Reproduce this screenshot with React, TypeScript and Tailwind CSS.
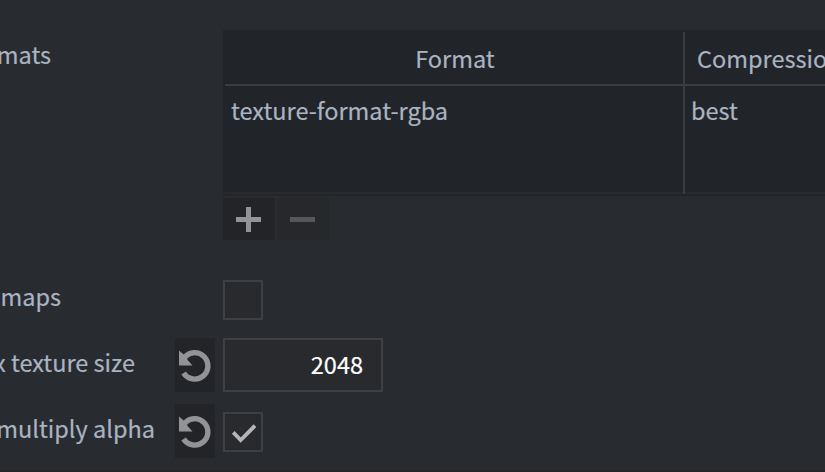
import type { ReactNode } from "react";

function Label({ width, children }: { width: string; children: ReactNode }) {
  return (
    <div className={`flex shrink-0 justify-end overflow-hidden whitespace-pre ${width}`}>
      <span>{children}</span>
    </div>
  );
}

function ResetButton() {
  return (
    <button className="flex h-[54px] w-10 shrink-0 items-center justify-center bg-[#232427]">
      <svg width="40" height="54" viewBox="0 0 40 54" fill="none">
        <path d="M9.5 19.5A13.2 13.2 0 1 1 8.6 35" stroke="#929396" strokeWidth="5.4" />
        <path d="M4 12.5V27.5H17.5L13 22.5L10.5 18Z" fill="#929396" />
      </svg>
    </button>
  );
}

function Checkbox({ checked = false }: { checked?: boolean }) {
  return (
    <div className="flex size-10 shrink-0 items-center justify-center border-2 border-[#3e4045] bg-[#292a2e]">
      {checked && (
        <svg width="36" height="36" viewBox="0 0 36 36" fill="none">
          <path d="M8.2 18.3L15.7 26L30 11.7" stroke="#b4b5b7" strokeWidth="3.8" />
        </svg>
      )}
    </div>
  );
}

export default function App() {
  return (
    <div className="h-[472px] w-[825px] overflow-hidden border-b-2 border-[#25262a] bg-[#282b2f] font-['Noto_Sans_CJK_SC','Noto_Sans',sans-serif] text-[23.5px] leading-9 text-[#a8b4c2] [-webkit-text-stroke:0.2px_currentColor]">
      <div className="flex h-[250px] pt-[30px]">
        <div className="w-[223px] shrink-0 pt-1.5">
          <Label width="w-[51px]">Formats</Label>
        </div>
        <div className="w-[602px] shrink-0">
          <div className="h-[164px] bg-[#212428]">
            <div className="flex h-[164px] pt-0.5 pl-0.5">
              <div className="flex w-[460px] shrink-0 flex-col border-r-2 border-[#3a3c40]">
                <div className="flex h-[54px] items-center justify-center border-b-2 border-[#3a3c40] pl-0.5">Format</div>
                <div className="flex h-12 items-center pl-1.5">texture-format-rgba</div>
                <div className="mt-auto h-0.5 bg-[#272a2e]" />
              </div>
              <div className="flex w-[140px] shrink-0 flex-col overflow-hidden">
                <div className="flex h-[54px] items-center border-b-2 border-[#3a3c40] pl-3">Compression</div>
                <div className="flex h-12 items-center pl-1.5">best</div>
                <div className="mt-auto h-0.5 bg-[#272a2e]" />
              </div>
            </div>
          </div>
          <div className="h-0.5 bg-[#232529]" />
          <div className="flex gap-0.5 pt-0.5">
            <button className="flex h-[42px] w-[52px] items-center justify-center bg-[#232427]">
              <svg width="52" height="42" viewBox="0 0 52 42">
                <path d="M13 19h10V9h5v10h10v5H28v10h-5V24H13Z" fill="#939497" />
              </svg>
            </button>
            <button className="flex h-[42px] w-[52px] items-center justify-center bg-[#26282c]">
              <svg width="52" height="42" viewBox="0 0 52 42">
                <path d="M13 19h25v5H13Z" fill="#55575b" />
              </svg>
            </button>
          </div>
        </div>
      </div>
      <div className="flex h-[88px] pt-[30px]">
        <div className="-mt-0.5 w-[223px] shrink-0">
          <Label width="w-[61px]">Make mipmaps</Label>
        </div>
        <Checkbox />
      </div>
      <div className="flex h-[66px]">
        <div className="w-[175px] shrink-0 pt-1.5">
          <Label width="w-[135px]">Max texture size</Label>
        </div>
        <ResetButton />
        <div className="ml-2 flex h-[54px] w-[160px] items-center justify-end border-2 border-[#3e4045] bg-[#292a2e] pr-[18px] pb-0.5 text-white">
          2048
        </div>
      </div>
      <div className="flex h-[66px]">
        <div className="w-[175px] shrink-0 pt-1.5">
          <Label width="w-[155px]">Premultiply alpha</Label>
        </div>
        <ResetButton />
        <div className="ml-2 pt-2">
          <Checkbox checked />
        </div>
      </div>
    </div>
  );
}
